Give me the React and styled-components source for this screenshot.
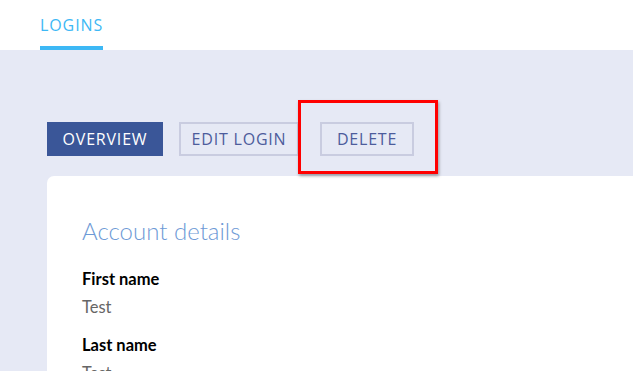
import React from 'react';
import styled, { createGlobalStyle } from 'styled-components';

const GlobalStyle = createGlobalStyle`
    html, body {
        margin: 0;
        padding: 0;
        background: #e6e9f5;
        font-family: "Lato", "Open Sans", sans-serif;
    }
`;

function App() {
    return (
        <>
            <GlobalStyle />
            <Header>
                <Tab active>LOGINS</Tab>
            </Header>
            <Main>
                <ButtonRow>
                    <ActionButton primary width={116}>OVERVIEW</ActionButton>
                    <ActionButton width={120}>EDIT LOGIN</ActionButton>
                    <Highlighted>
                        <ActionButton width={94}>DELETE</ActionButton>
                        <HighlightBox />
                    </Highlighted>
                </ButtonRow>
                <Card>
                    <CardTitle>Account details</CardTitle>
                    <Field>
                        <FieldLabel>First name</FieldLabel>
                        <FieldValue>Test</FieldValue>
                    </Field>
                    <Field>
                        <FieldLabel>Last name</FieldLabel>
                        <FieldValue>Test</FieldValue>
                    </Field>
                </Card>
            </Main>
        </>
    );
}

export default App;

const Header = styled.div`
    background: #ffffff;
    height: 50px;
    padding-left: 40px;
    display: flex;
    align-items: flex-end;
`;

const Tab = styled.div`
    font-family: "Open Sans", sans-serif;
    font-size: 16px;
    letter-spacing: 0.9px;
    color: ${props => props.active ? '#3db8f5' : '#6a7590'};
    padding-bottom: 10px;
    border-bottom: 4px solid ${props => props.active ? '#3db8f5' : 'transparent'};
    line-height: 22px;
`;

const Main = styled.div`
    padding: 72px 0 0 47px;
    height: 249px;
    overflow: hidden;
`;

const ButtonRow = styled.div`
    display: flex;
    align-items: center;
    gap: 16px;
    margin-bottom: 20px;
`;

const ActionButton = styled.button`
    width: ${props => props.width}px;
    height: 34px;
    padding: 0;
    font-family: "Open Sans", sans-serif;
    font-size: 16px;
    letter-spacing: 0.8px;
    background: ${props => props.primary ? '#3a5698' : 'transparent'};
    color: ${props => props.primary ? '#ffffff' : '#4d5c9c'};
    border: ${props => props.primary ? 'none' : '2px solid #c9cce0'};
    border-radius: 0;
    cursor: pointer;
`;

const Highlighted = styled.div`
    position: relative;
    margin-left: 5px;
    display: flex;
`;

const HighlightBox = styled.div`
    position: absolute;
    left: -22px;
    right: -24px;
    top: -22px;
    bottom: -18px;
    border: 3px solid #ff0000;
    box-shadow: 1px 2px 3px rgba(0, 0, 0, 0.35);
    pointer-events: none;
`;

const Card = styled.div`
    background: #ffffff;
    border-radius: 7px 0 0 0;
    padding: 40px 35px 0;
    min-height: 220px;
`;

const CardTitle = styled.h2`
    margin: 0 0 22px;
    font-family: "Lato", sans-serif;
    font-weight: 300;
    font-size: 24px;
    color: #6e9ad6;
    line-height: 30px;
`;

const Field = styled.div`
    margin-bottom: 16px;
`;

const FieldLabel = styled.div`
    font-family: "Lato", sans-serif;
    font-weight: 700;
    font-size: 16.5px;
    color: #000000;
    line-height: 22px;
    margin-bottom: 6px;
`;

const FieldValue = styled.div`
    font-family: "Lato", sans-serif;
    font-size: 16.5px;
    color: #666666;
    line-height: 22px;
`;
